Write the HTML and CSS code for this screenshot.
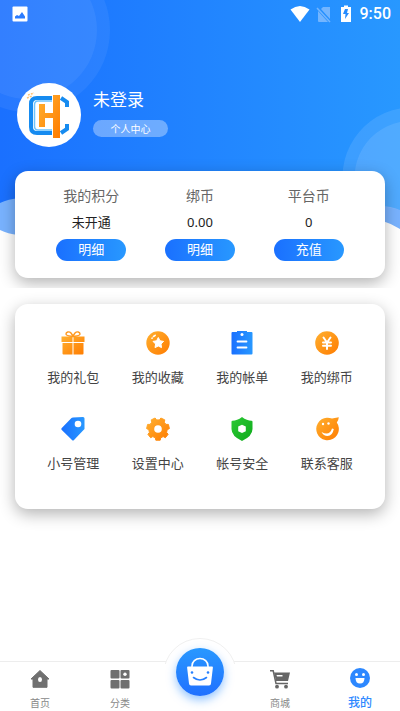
FILE: index.html
```html
<!DOCTYPE html>
<html lang="zh-CN">
<head>
<meta charset="utf-8">
<meta name="viewport" content="width=device-width, initial-scale=1">
<title>我的</title>
<link rel="stylesheet" href="styles.css">
</head>
<body>
<svg class="defs" width="0" height="0" aria-hidden="true">
  <defs>
    <linearGradient id="orange" x1="0" y1="0" x2="1" y2="1"><stop offset="0" stop-color="#ffb030"/><stop offset="1" stop-color="#ff7c00"/></linearGradient>
    <linearGradient id="blue" x1="0" y1="0" x2="1" y2="0"><stop offset="0" stop-color="#1a70ff"/><stop offset="1" stop-color="#2898ff"/></linearGradient>
    <linearGradient id="green" x1="0" y1="0" x2="1" y2="1"><stop offset="0" stop-color="#2cc934"/><stop offset="1" stop-color="#0eaa1c"/></linearGradient>
  </defs>
</svg>
<header class="hero">
  <svg class="hero-bg" viewBox="0 0 400 240" preserveAspectRatio="none" aria-hidden="true">
    <path fill="#1f80ff" fill-opacity=".6" d="M0 0H400V229Q390 223 380 220L200 238L18 235Q8 234 0 230Z"/>
    <path fill="url(#blue)" d="M0 0H400V210Q390 206 380 206L200 220L20 198Q8 199 0 203Z"/>
    <g fill="#fff">
      <circle cx="28" cy="30" r="82" fill-opacity=".06"/>
      <circle cx="28" cy="30" r="69" fill-opacity=".06"/>
      <path fill-opacity=".1" d="M400 108.5A70 70 0 0 0 349 207Q374 203 400 210Z"/>
      <path fill-opacity=".1" d="M400 122A57 57 0 0 0 362 206Q380 203 400 210Z"/>
    </g>
  </svg>
  <div class="status">
    <svg width="16" height="16" viewBox="0 0 16 16"><rect x=".5" y=".5" width="15" height="15" rx="1" fill="#fff"/><path fill="#2b7cff" d="M3 12.500v-2l2-1.500 2 1 3-4 3 4.500v2z"/></svg>
    <div class="status-right">
      <svg width="20" height="18" viewBox="0 0 20 18"><path fill="#fff" d="M10 17L.5 4.500Q10-2.500 19.500 4.500Z"/></svg>
      <svg class="sim" width="16" height="18" viewBox="0 0 16 18"><path fill="#73b5ff" d="M7 2h7v12L5 4zM2 6l10 11H3q-1 0-1-1z"/><path stroke="#73b5ff" stroke-width="1.500" d="M1 3L14 17"/></svg>
      <svg width="12" height="18" viewBox="0 0 12 18"><path fill="#fff" d="M1 2h3V.5h4V2h3v15H1z"/><path fill="#258cff" d="M5 4h3L7 8h2l-4 6 .5-5H3z"/></svg>
      <time>9:50</time>
    </div>
  </div>
  <div class="profile">
    <svg class="avatar" viewBox="0 0 64 64" role="img" aria-label="头像">
      <circle cx="32" cy="32" r="32" fill="#fff"/>
      <g fill="none" stroke="#168bf0" stroke-width="4">
        <path d="M35 15H20Q14 15 14 21V44Q14 50 20 50H35"/>
        <path d="M44 15L50 19V24M50 41V46L44 50"/>
      </g>
      <path d="M35 18H21Q17.500 18 17.500 22V43Q17.500 47 21 47H35" fill="none" stroke="#6cc4ff" stroke-width="1.500"/>
      <path fill="url(#orange)" d="M22 21h6v9h8V12h7v43h-7V35h-8v9h-6z"/>
      <path stroke="#ffc477" stroke-width="1.500" stroke-dasharray="2 1" d="M11 12l6-2M10 15l5-2"/>
    </svg>
    <div class="who">
      <h1>未登录</h1>
      <a class="center-link" href="#">个人中心</a>
    </div>
  </div>
  <section class="card wallet">
    <div class="balance"><h2>我的积分</h2><p>未开通</p><button type="button">明细</button></div>
    <div class="balance"><h2>绑币</h2><p>0.00</p><button type="button">明细</button></div>
    <div class="balance"><h2>平台币</h2><p>0</p><button type="button">充值</button></div>
  </section>
</header>
<main>
  <nav class="card menu" aria-label="功能">
    <a href="#"><svg viewBox="0 0 24 24"><path fill="url(#orange)" d="M.5 5.500h11V11H.5zM12.500 5.500h11V11h-11zM1.500 12h10v11.500h-9q-1 0-1-1zM12.500 12h10v10.500q0 1-1 1h-9z"/><path fill="none" stroke="#ff991f" stroke-width="1.400" d="M12 5.500C9 5 5 5 5 3S8 0 10 2l2 3 2-3c2-2 5-1 5 1s-4 2-7 2.500"/></svg>我的礼包</a>
    <a href="#"><svg viewBox="0 0 24 24"><circle cx="12" cy="12" r="11.700" fill="url(#orange)"/><path fill="#fff" stroke="#fff" stroke-linejoin="round" d="M12.300 6.500l1.700 3.300 3.600.6-2.600 2.600.5 3.600-3.200-1.600-3.300 1.600.6-3.600L7 10.400l3.600-.6z"/><path stroke="#fff" stroke-width="1.600" stroke-linecap="round" d="M6 7.200l.2-.2M7.500 5.500l1.700-1.200"/></svg>我的收藏</a>
    <a href="#"><svg viewBox="0 0 24 24"><path fill="url(#blue)" d="M2.500 1H7V0h10v1h4.500q1 0 1 1v20.500q0 1-1 1h-19q-1 0-1-1V2q0-1 1-1z"/><circle cx="12" cy="3.500" r="1.500" fill="#fff"/><path stroke="#fff" stroke-width="1.800" stroke-linecap="round" d="M7.500 10.500h9M7.500 16.500h9"/></svg>我的帐单</a>
    <a href="#"><svg viewBox="0 0 24 24"><circle cx="12" cy="12" r="11.800" fill="url(#orange)"/><path fill="none" stroke="#fff" stroke-width="2" stroke-linecap="round" stroke-linejoin="round" d="M8.500 6.500l3.500 5 3.500-5M12 11.500V18M8 11.500h8M8 14.800h8"/></svg>我的绑币</a>
    <a href="#"><svg viewBox="0 0 24 24"><path fill="url(#blue)" d="M12 .5L22 0q1.500 0 1.500 1.500V12L13 23q-1 1-2 0L.8 13q-1-1 0-2L10.500 1Q11 .5 12 .5z"/><circle cx="17" cy="7" r="3.300" fill="#fff"/></svg>小号管理</a>
    <a href="#"><svg viewBox="0 0 24 24"><path fill="url(#orange)" stroke="url(#orange)" stroke-linejoin="round" d="M14.700 20.800L14.200 23.200H9.800L9.300 20.800 6.800 19.600 4.600 20.700 1.900 17.300 3.400 15.400 2.800 12.700.6 11.600 1.600 7.400H4L5.800 5.200 5.200 2.900 9.100 1 10.600 2.900h2.800L14.900 1 18.800 2.900 18.200 5.200 20 7.400h2.400L23.400 11.600 21.200 12.700 20.600 15.400 22.100 17.300 19.400 20.700 17.200 19.600z"/><circle cx="12" cy="12" r="3.800" fill="#fff"/></svg>设置中心</a>
    <a href="#"><svg viewBox="0 0 24 24"><path fill="url(#green)" d="M12 0q5 3.800 9.500 3.800 1 0 1 1V12q0 7-10.500 12Q1.500 19 1.500 12V4.800q0-1 1-1Q7 3.800 12 0z"/><path fill="#fff" d="M12 7.800l3.800 1.800v4.600L12 16l-3.800-1.800V9.600z"/></svg>帐号安全</a>
    <a href="#"><svg viewBox="0 0 24 24"><path fill="url(#orange)" d="M17 1.600L23.800.3q-.2 3-2 5.200A11.300 11.300 0 1 1 17 1.600z"/><circle cx="8" cy="7" r="1.200" fill="#fff"/><circle cx="13.500" cy="6.500" r="1.200" fill="#fff"/><path fill="#fff" d="M6.500 15q8 4.500 10.500-3.500l1.800.5Q17.500 19 12.500 19 8.500 19 6.500 15z"/></svg>联系客服</a>
  </nav>
</main>
<nav class="tabs" aria-label="主导航">
  <a href="#"><svg viewBox="0 0 20 20"><path fill="#707070" stroke="#707070" stroke-linejoin="round" d="M10 1.500L19 10h-2v8.300H3V10H1z"/><ellipse cx="10" cy="10.500" rx="2" ry="2.500" fill="#fff"/></svg>首页</a>
  <a href="#"><svg viewBox="0 0 20 20"><g fill="#707070"><rect x=".5" y="1" width="9" height="8.500" rx="1"/><rect x="10.500" y="1" width="9" height="8.500" rx="1"/><rect x=".5" y="11" width="9" height="8.500" rx="1"/><rect x="10.500" y="11" width="9" height="8.500" rx="1"/></g><circle cx="15" cy="5.200" r="1.700" fill="#fff"/></svg>分类</a>
  <div class="bag-slot">
    <a class="bag" href="#" aria-label="礼包商店"><svg viewBox="0 0 48 48"><path fill="none" stroke="#fff" stroke-width="1.600" d="M16 19v-1a8 7.500 0 0 1 16 0v1"/><path fill="#fff" d="M12 18.500h24q1 0 .9 1L35 35.500q-.1 2-2 2H15q-1.900 0-2-2l-1.900-16q-.1-1 .9-1z"/><path fill="none" stroke="#2680ff" stroke-width="1.600" stroke-linecap="round" d="M17.500 29.500q6.500 5 13 0"/><circle cx="16" cy="24.500" r="1.300" fill="#2680ff"/><circle cx="32" cy="24.500" r="1.300" fill="#2680ff"/></svg></a>
  </div>
  <a href="#"><svg viewBox="0 0 20 20"><path fill="none" stroke="#666" stroke-width="1.500" d="M0 1.800h3.200L6 14.500h12"/><path fill="#666" fill-rule="evenodd" d="M4 3.500h16L18 12H6zM6.500 6h6v1.500H7z"/><circle cx="7" cy="17.700" r="1.900" fill="#666"/><circle cx="16" cy="17.700" r="1.900" fill="#666"/></svg>商城</a>
  <a class="active" href="#" aria-current="page"><svg viewBox="0 0 20 20"><circle cx="10" cy="10" r="10" fill="#2d88ff"/><circle cx="6.500" cy="6.500" r="1.500" fill="#fff"/><circle cx="13.500" cy="6.500" r="1.500" fill="#fff"/><path fill="#fff" d="M5.500 10h9q0 5.500-4.500 5.500T5.500 10z"/></svg>我的</a>
</nav>
</body>
</html>
```
FILE: styles.css
```css
* { box-sizing: border-box; }

body {
  margin: 0;
  min-height: 100vh;
  display: flex;
  flex-direction: column;
  background: #fff;
  color: #444;
  font-family: "Noto Sans CJK SC", sans-serif;
  font-size: 13px;
  line-height: 20px;
}

h1, h2, p { margin: 0; font-weight: 400; }
a { color: inherit; text-decoration: none; }
svg { display: block; flex: none; }
.defs { position: absolute; }

.hero {
  position: relative;
  overflow: hidden;
  padding: 0 15px 10px;
}
.hero-bg {
  position: absolute;
  inset: 0 0 auto;
  width: 100%;
  height: 240px;
}
.hero > :not(.hero-bg) { position: relative; }

.status {
  display: flex;
  justify-content: space-between;
  align-items: center;
  height: 27px;
  margin: 0 -6px 0 -3px;
}
.status-right { display: flex; align-items: center; gap: 8px; }
.status-right .sim { margin: 0 0 0 -2px; }
.status time {
  color: #fff;
  font: 500 16px/20px Roboto, sans-serif;
}

.profile {
  display: flex;
  align-items: flex-start;
  gap: 12px;
  margin-top: 56px;
  padding-left: 2px;
}
.avatar { width: 64px; height: 64px; }
.who {
  display: flex;
  flex-direction: column;
  align-items: flex-start;
  gap: 9px;
  padding-top: 4px;
}
.who h1 { color: #fff; font-size: 17px; line-height: 24px; }
.center-link {
  width: 75px;
  border-radius: 9px;
  background: rgb(255 255 255 / 35%);
  color: #fff;
  font-size: 10px;
  line-height: 17px;
  text-align: center;
}

.card {
  border-radius: 13px;
  background: #fff;
  box-shadow: 0 5px 16px rgb(0 0 0 / 30%);
}

.wallet {
  display: flex;
  margin-top: 24px;
  padding: 14px 22px 17px;
}
.balance {
  flex: 1;
  display: flex;
  flex-direction: column;
  align-items: center;
}
.balance h2 { color: #666; font-size: 14px; line-height: 20px; }
.balance p {
  margin-top: 7px;
  color: #222;
  font-family: "Noto Sans", "Noto Sans CJK SC", sans-serif;
}
.balance button {
  width: 70px;
  height: 22px;
  margin-top: 7px;
  padding: 0 0 2px;
  border: 0;
  border-radius: 11px;
  background: linear-gradient(90deg, #1a70ff, #2898ff);
  color: #fff;
  font: inherit;
}

main { flex: 1; padding: 16px 15px; }
.menu {
  display: grid;
  grid-template-columns: repeat(4, 1fr);
  row-gap: 30px;
  padding: 27px 16px 36px;
}
.menu a {
  display: flex;
  flex-direction: column;
  align-items: center;
  gap: 12px;
}
.menu svg { width: 24px; height: 24px; }

.tabs {
  display: flex;
  height: 50px;
  border-top: 1px solid #ededed;
  background: #fff;
  color: #888;
  font-size: 10px;
  line-height: 16px;
}
.tabs > * { flex: 1; }
.tabs > a {
  display: flex;
  flex-direction: column;
  align-items: center;
  padding-top: 7px;
  gap: 6px;
}
.tabs > a > svg { width: 20px; height: 20px; }
.tabs > .active { padding-top: 6px; color: #2d88ff; font-size: 12px; font-weight: 500; }
.bag-slot { display: flex; justify-content: center; }
.bag-slot::before {
  content: "";
  position: absolute;
  width: 72px;
  height: 72px;
  margin-top: -24px;
  border-radius: 50%;
  background: #fff;
  border: 1px solid #f0f0f0;
  clip-path: inset(0 0 48px);
}
.bag {
  position: relative;
  width: 48px;
  height: 48px;
  margin-top: -14px;
  border-radius: 50%;
  background: linear-gradient(#2898ff, #2070ff);
  box-shadow: 0 4px 10px rgb(40 140 255 / 50%);
}
```
